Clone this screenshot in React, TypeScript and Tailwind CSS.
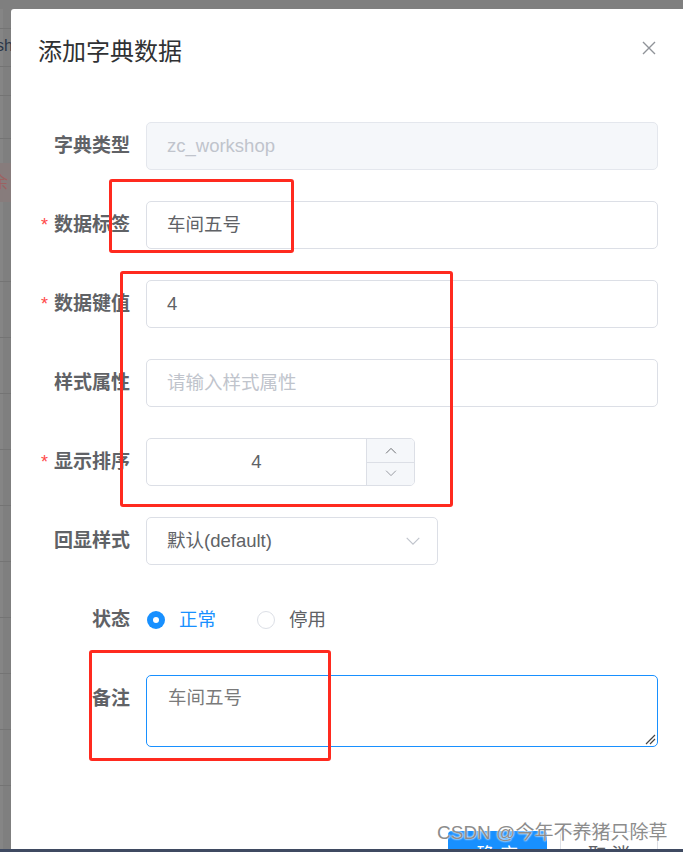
import React from "react";

const FONT = '"Liberation Sans", "Noto Sans CJK SC", sans-serif';

function Label({ text, required }: { text: string; required?: boolean }) {
  return (
    <div className="flex h-[48px] w-[108px] shrink-0 items-center justify-end pr-[16px] text-[19px] font-bold text-[#606266]">
      {required && <span className="mr-[6px] text-[18px] font-normal text-[#ff4949]">*</span>}
      {text}
    </div>
  );
}

function Chevron({ up, className }: { up?: boolean; className?: string }) {
  return (
    <svg viewBox="0 0 16 10" className={className} fill="none" stroke="currentColor" strokeWidth="1.3">
      {up ? <path d="M1 9 L8 2 L15 9" /> : <path d="M1 1 L8 8 L15 1" />}
    </svg>
  );
}

export default function App() {
  const bgLines = [28, 66, 95, 138, 281, 337, 393, 449, 505, 561, 617, 673, 729, 785];

  return (
    <div
      className="relative flex h-[852px] w-[683px] flex-col overflow-hidden bg-[#7f7f7f]"
      style={{ fontFamily: FONT }}
    >
      <div className="h-[9px] shrink-0" />
      <div className="flex min-h-0 flex-1">
        {/* page behind the overlay */}
        <div className="relative w-[11px] shrink-0 overflow-hidden bg-[#7f7f7f]">
          <div className="absolute left-0 top-0 h-full w-[3px] bg-[#858585]" />
          {bgLines.map((y) => (
            <div key={y} className="absolute left-0 h-px w-full bg-[#747474]" style={{ top: y - 9 }} />
          ))}
          <div className="absolute -left-[4px] top-[29px] text-[16px] leading-none text-[#2a3547]">sh</div>
          <div className="absolute left-0 top-[154px] flex h-[39px] w-full items-center bg-[#877c7c] text-[16px] text-[#9c6262]">
            <span className="-ml-[8px]">余</span>
          </div>
        </div>

        {/* dialog */}
        <div className="flex min-w-0 flex-1 flex-col rounded-tl-[3px] bg-white">
          <div className="flex items-center justify-between pl-[27px] pr-[27px] pt-[27px]">
            <div className="text-[24px] leading-[32px] text-[#303133]">添加字典数据</div>
            <svg viewBox="0 0 14 14" className="-mt-[9px] h-[14px] w-[14px] text-[#909399]" stroke="currentColor" strokeWidth="1.4">
              <path d="M1 1 L13 13 M13 1 L1 13" />
            </svg>
          </div>

          <div className="flex flex-col gap-[31px] pl-[27px] pr-[25px] pt-[54px]">
            <div className="flex">
              <Label text="字典类型" />
              <div className="flex h-[48px] flex-1 items-center rounded-[5px] border border-[#e4e7ed] bg-[#f5f7fa] px-[20px] text-[18.5px] text-[#c0c4cc]">
                zc_workshop
              </div>
            </div>

            <div className="flex">
              <Label text="数据标签" required />
              <div className="flex h-[48px] flex-1 items-center rounded-[5px] border border-[#dcdfe6] px-[20px] text-[18.5px] text-[#606266]">
                车间五号
              </div>
            </div>

            <div className="flex">
              <Label text="数据键值" required />
              <div className="flex h-[48px] flex-1 items-center rounded-[5px] border border-[#dcdfe6] px-[20px] text-[18.5px] text-[#606266]">
                4
              </div>
            </div>

            <div className="flex">
              <Label text="样式属性" />
              <div className="flex h-[48px] flex-1 items-center rounded-[5px] border border-[#dcdfe6] px-[20px] text-[18.5px] text-[#c0c4cc]">
                请输入样式属性
              </div>
            </div>

            <div className="flex">
              <Label text="显示排序" required />
              <div className="flex h-[48px] w-[269px] overflow-hidden rounded-[5px] border border-[#dcdfe6]">
                <div className="flex flex-1 items-center justify-center text-[18.5px] text-[#606266]">4</div>
                <div className="flex w-[48px] flex-col border-l border-[#dcdfe6] bg-[#f5f7fa]">
                  <div className="flex flex-1 items-center justify-center border-b border-[#dcdfe6]">
                    <Chevron up className="h-[7px] w-[12px] text-[#606266]" />
                  </div>
                  <div className="flex flex-1 items-center justify-center">
                    <Chevron className="h-[7px] w-[12px] text-[#909399]" />
                  </div>
                </div>
              </div>
            </div>

            <div className="flex">
              <Label text="回显样式" />
              <div className="flex h-[48px] w-[292px] items-center justify-between rounded-[5px] border border-[#dcdfe6] pl-[20px] pr-[16px] text-[18.5px] text-[#606266]">
                <span>默认(default)</span>
                <Chevron className="h-[9px] w-[16px] text-[#c0c4cc]" />
              </div>
            </div>

            <div className="flex">
              <Label text="状态" />
              <div className="flex h-[48px] items-center pl-[1px] text-[18.5px]">
                <span className="flex h-[18px] w-[18px] items-center justify-center rounded-full bg-[#1890ff]">
                  <span className="h-[6px] w-[6px] rounded-full bg-white" />
                </span>
                <span className="ml-[14px] text-[#1890ff]">正常</span>
                <span className="ml-[41px] h-[18px] w-[18px] rounded-full border border-[#dcdfe6] bg-white" />
                <span className="ml-[14px] text-[#606266]">停用</span>
              </div>
            </div>

            <div className="flex">
              <Label text="备注" />
              <div className="relative h-[72px] flex-1 rounded-[5px] border border-[#1890ff] px-[21px] pt-[8px] text-[18.5px] leading-[28px] text-[#7a7a7a]">
                车间五号
                <svg viewBox="0 0 12 12" className="absolute bottom-[1px] right-[1px] h-[12px] w-[12px] text-[#444]" stroke="currentColor" strokeWidth="1.2">
                  <path d="M2 11 L11 2 M6 11 L11 6" />
                </svg>
              </div>
            </div>
          </div>

          <div className="flex justify-end gap-[13px] pr-[25px] pt-[84px]">
            <div className="flex h-[48px] w-[99px] items-center justify-center rounded-[4px] bg-[#1890ff] text-[18.5px] text-white">
              确 定
            </div>
            <div className="flex h-[48px] w-[98px] items-center justify-center rounded-[4px] border border-[#dcdfe6] bg-white text-[18.5px] text-[#606266]">
              取 消
            </div>
          </div>
        </div>
      </div>
      <div className="h-[3px] shrink-0 bg-[#3f4a61]" />

      {/* annotations */}
      <div className="pointer-events-none absolute left-[109px] top-[179px] h-[74px] w-[185px] rounded-[3px] border-[3px] border-[#ff2a1f]" />
      <div className="pointer-events-none absolute left-[120px] top-[271px] h-[236px] w-[333px] rounded-[3px] border-[3px] border-[#ff2a1f]" />
      <div className="pointer-events-none absolute left-[89px] top-[650px] h-[111px] w-[242px] rounded-[3px] border-[3px] border-[#ff2a1f]" />

      <div
        className="pointer-events-none absolute left-[437px] top-[820px] text-[19px] leading-[26px] text-[#8c8c8c]"
        style={{ textShadow: "0 0 2px #fff, 0 0 2px #fff" }}
      >
        CSDN @今年不养猪只除草
      </div>
    </div>
  );
}
